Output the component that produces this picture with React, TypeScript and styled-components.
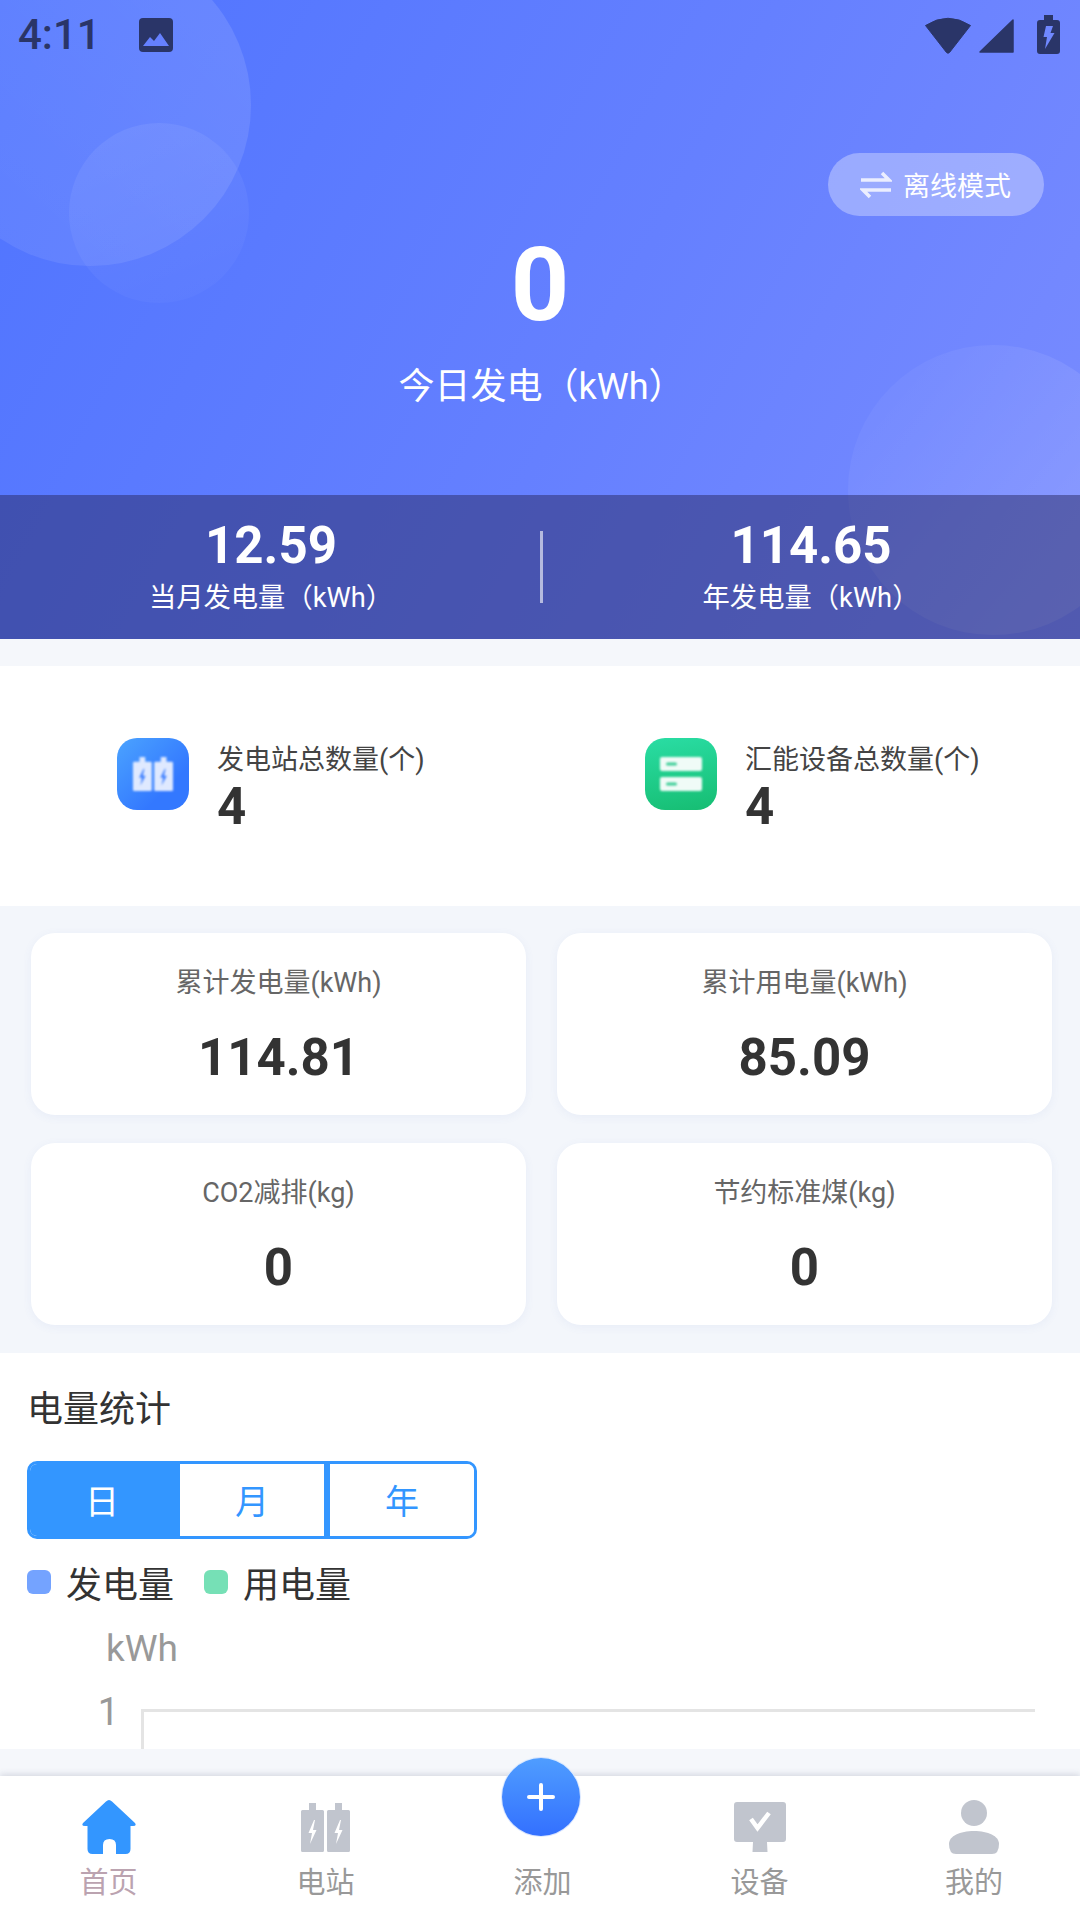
import React from "react";
import styled, { createGlobalStyle } from "styled-components";

const FONT = `Roboto, "Noto Sans CJK SC", sans-serif`;

const GlobalStyle = createGlobalStyle`
  html, body {
    margin: 0;
    padding: 0;
    background: #f5f7fb;
  }
  * {
    box-sizing: border-box;
  }
`;

const Page = styled.div`
  width: 1080px;
  height: 1920px;
  display: flex;
  flex-direction: column;
  overflow: hidden;
  position: relative;
  background: #f5f7fb;
  font-family: ${FONT};
`;

// Hero
const Hero = styled.header`
  position: relative;
  height: 639px;
  display: flex;
  flex-direction: column;
  overflow: hidden;
  background: linear-gradient(118deg, #4f74ff 0%, #6580ff 55%, #7a8cff 100%);
`;

const Bubble = styled.div<{ $x: number; $y: number; $r: number; $angle: number; $from: number; $to: number }>`
  position: absolute;
  left: ${(p) => p.$x - p.$r}px;
  top: ${(p) => p.$y - p.$r}px;
  width: ${(p) => p.$r * 2}px;
  height: ${(p) => p.$r * 2}px;
  border-radius: 50%;
  background: linear-gradient(
    ${(p) => p.$angle}deg,
    rgba(255, 255, 255, ${(p) => p.$from}),
    rgba(255, 255, 255, ${(p) => p.$to})
  );
`;

const StatusBar = styled.div`
  position: relative;
  height: 70px;
  display: flex;
  align-items: center;
  padding: 0 20px 0 18px;
  color: #2a3568;
`;

const Clock = styled.span`
  font-size: 42px;
  line-height: 70px;
  font-weight: 500;
  width: 120px;
`;

const StatusRight = styled.div`
  margin-left: auto;
  display: flex;
  align-items: center;
  gap: 8px;
`;

const ModePill = styled.div`
  position: relative;
  align-self: flex-end;
  margin: 83px 36px 0 0;
  width: 216px;
  height: 63px;
  border-radius: 32px;
  background: rgba(255, 255, 255, 0.32);
  display: flex;
  align-items: center;
  padding-left: 32px;
  gap: 11px;
  color: #fff;
  font-size: 27px;
`;

const BigValue = styled.div`
  position: relative;
  margin-top: 17px;
  text-align: center;
  color: #fff;
  font-size: 102px;
  line-height: 105px;
  font-weight: 700;
`;

const BigLabel = styled.div`
  position: relative;
  margin-top: 24px;
  padding-left: 3px;
  text-align: center;
  color: #fff;
  font-size: 36px;
  line-height: 50px;
`;

const Strip = styled.div`
  position: relative;
  margin-top: auto;
  height: 144px;
  display: grid;
  grid-template-columns: 1fr 1fr;
  background: rgba(44, 44, 104, 0.52);
`;

const StripCol = styled.div<{ $divided?: boolean }>`
  position: relative;
  display: flex;
  flex-direction: column;
  align-items: center;
  padding: 22px 0 0 2px;
  color: #fff;
  ${(p) =>
    p.$divided &&
    `&::before {
      content: "";
      position: absolute;
      left: 0;
      top: 36px;
      width: 3px;
      height: 72px;
      background: rgba(255, 255, 255, 0.6);
    }`}
`;

const StripValue = styled.div`
  font-size: 51px;
  line-height: 58px;
  font-weight: 700;
`;

const StripLabel = styled.div`
  font-size: 27.3px;
  line-height: 36px;
  margin-top: 5px;
`;

// Counters
const CounterPanel = styled.section`
  margin-top: 27px;
  height: 240px;
  background: #fff;
  display: grid;
  grid-template-columns: 528px 1fr;
  padding-left: 117px;
  align-items: center;
`;

const Counter = styled.div`
  display: flex;
  align-items: flex-start;
  gap: 28px;
`;

const CounterIcon = styled.div<{ $tone: "blue" | "green" }>`
  width: 72px;
  height: 72px;
  border-radius: 20px;
  display: flex;
  align-items: center;
  justify-content: center;
  background: ${(p) =>
    p.$tone === "blue"
      ? "linear-gradient(135deg, #4ba3ff 0%, #3378ff 70%)"
      : "linear-gradient(170deg, #2adda4 0%, #16bd72 100%)"};
  svg {
    filter: blur(0.8px);
  }
`;

const CounterText = styled.div`
  padding-top: 4px;
`;

const CounterLabel = styled.div`
  color: #444;
  font-size: 27px;
  line-height: 36px;
`;

const CounterValue = styled.div`
  margin-top: 1px;
  color: #333;
  font-size: 51px;
  line-height: 56px;
  font-weight: 700;
`;

// Totals
const TotalsGrid = styled.section`
  height: 447px;
  padding: 27px 28px 27px 31px;
  display: grid;
  grid-template-columns: 495px 495px;
  grid-auto-rows: 182px;
  column-gap: 31px;
  row-gap: 28px;
  background: #f3f6fb;
`;

const TotalCard = styled.div`
  background: #fff;
  border-radius: 24px;
  box-shadow: 0 2px 10px rgba(90, 120, 200, 0.07);
  display: flex;
  flex-direction: column;
  align-items: center;
  padding-top: 28px;
`;

const TotalLabel = styled.div`
  color: #666;
  font-size: 27px;
  line-height: 44px;
`;

const TotalValue = styled.div`
  margin-top: 22px;
  color: #333;
  font-size: 51px;
  line-height: 62px;
  font-weight: 700;
`;

// Chart
const ChartPanel = styled.section`
  height: 396px;
  background: #fff;
  padding: 32px 45px 0 27px;
  overflow: hidden;
`;

const ChartTitle = styled.h2`
  margin: 0;
  color: #333;
  font-size: 36px;
  line-height: 50px;
  font-weight: 400;
`;

const Segments = styled.div`
  margin-top: 26px;
  width: 450px;
  height: 78px;
  display: grid;
  grid-template-columns: 150px 144px 1fr;
  border: 3px solid #3396ff;
  border-radius: 10px;
  overflow: hidden;
`;

const Segment = styled.div<{ $active?: boolean; $divided?: boolean }>`
  display: flex;
  align-items: center;
  justify-content: center;
  padding-bottom: 2px;
  font-size: 34px;
  color: ${(p) => (p.$active ? "#fff" : "#3396ff")};
  background: ${(p) => (p.$active ? "#3396ff" : "#fff")};
  padding-right: ${(p) => (p.$active ? "6px" : "0")};
  border-left: ${(p) => (p.$divided ? "6px solid #3396ff" : "none")};
`;

const Legend = styled.div`
  margin-top: 18px;
  height: 50px;
  display: flex;
  align-items: center;
`;

const LegendItem = styled.div`
  display: flex;
  align-items: center;
  gap: 15px;
  margin-right: 30px;
  color: #333;
  font-size: 36px;
`;

const Swatch = styled.span<{ $color: string }>`
  width: 24px;
  height: 24px;
  border-radius: 6px;
  background: ${(p) => p.$color};
`;

const Unit = styled.div`
  margin: 18px 0 0 79px;
  color: #999;
  font-size: 37px;
  line-height: 48px;
`;

const AxisRow = styled.div`
  margin-top: 29px;
  display: flex;
  align-items: flex-start;
`;

const AxisTick = styled.div`
  width: 114px;
  padding-right: 22px;
  text-align: right;
  color: #999;
  font-size: 38px;
  line-height: 44px;
  margin-top: -12px;
`;

const Plot = styled.div`
  flex: 1;
  height: 60px;
  margin-top: 7px;
  border-top: 3px solid #e4e4e4;
  border-left: 3px solid #e4e4e4;
`;

// Bottom tabs
const TabBar = styled.nav`
  margin-top: 27px;
  height: 144px;
  position: relative;
  background: #fff;
  display: grid;
  grid-template-columns: 217px 217px 217px 217px 212px;
  box-shadow: 0 -2px 6px rgba(60, 70, 100, 0.16);
`;

const Tab = styled.div<{ $active?: boolean }>`
  display: flex;
  flex-direction: column;
  align-items: center;
  color: ${(p) => (p.$active ? "#bba3b0" : "#999")};
  font-size: 29px;
  padding-top: 24px;
`;

const TabIcon = styled.div`
  width: 54px;
  height: 54px;
  display: flex;
  align-items: flex-start;
  justify-content: center;
`;

const TabText = styled.span`
  margin-top: 9px;
  line-height: 40px;
`;

const AddButton = styled.div`
  position: absolute;
  left: 501px;
  top: -19px;
  width: 80px;
  height: 80px;
  border-radius: 50%;
  background: linear-gradient(180deg, #4f9dff 0%, #3370ff 100%);
  border: 1px solid rgba(255, 255, 255, 0.8);
  display: flex;
  align-items: center;
  justify-content: center;
`;

const STATUS = "#2a3568";

const ImageIcon = () => (
  <svg width="36" height="36" viewBox="0 0 36 36">
    <rect x="1" y="1" width="34" height="34" rx="4" fill={STATUS} />
    <path d="M5 29 L12 20 L16 24 L22 16 L31 29 Z" fill="#6580ff" />
  </svg>
);

const WifiIcon = () => (
  <svg width="46" height="37" viewBox="0 0 46 37">
    <path
      d="M0.5 8.5 Q23 -6 45.5 8.5 L24.5 35.5 Q23 37 21.5 35.5 Z"
      fill={STATUS}
      stroke={STATUS}
      strokeLinejoin="round"
    />
  </svg>
);

const SignalIcon = () => (
  <svg width="35" height="34" viewBox="0 0 35 34" style={{ marginTop: 2 }}>
    <path d="M34 1 V33 H1 Z" fill={STATUS} stroke={STATUS} strokeWidth="1.5" strokeLinejoin="round" />
  </svg>
);

const BatteryIcon = () => (
  <svg width="23" height="39" viewBox="0 0 23 39" style={{ marginLeft: 15, marginTop: -2 }}>
    <path d="M7 0 H16 V5 H20 Q23 5 23 8 V36 Q23 39 20 39 H3 Q0 39 0 36 V8 Q0 5 3 5 H7 Z" fill={STATUS} />
    <path d="M9 11 H16 L13.5 18 H17.5 L8 34 L10 22 H6.5 Z" fill="#7088ff" />
  </svg>
);

const SwapIcon = () => (
  <svg width="32" height="28" viewBox="0 0 32 28" fill="none" stroke="#fff" strokeOpacity="0.8" strokeWidth="3.5">
    <path d="M1 9 H29 L22 2" />
    <path d="M31 19 H3 L10 26" />
  </svg>
);

// two battery cells, each 23 wide on a 49 box
const BatteriesArt = ({ bolt, body }: { bolt: string; body: string }) => (
  <>
    <path d="M8 0 H15 V7 H21.5 Q23 7 23 8.5 V47.5 Q23 49 21.5 49 H1.5 Q0 49 0 47.5 V8.5 Q0 7 1.5 7 H8 Z" fill={body} />
    <path d="M13 17 L7.5 30 H11 L9 41 L15.5 27 H12 L14 17 Z" fill={bolt} />
    <path d="M34 0 H41 V7 H47.5 Q49 7 49 8.5 V47.5 Q49 49 47.5 49 H27.5 Q26 49 26 47.5 V8.5 Q26 7 27.5 7 H34 Z" fill={body} />
    <path d="M39 17 L33.5 30 H37 L35 41 L41.5 27 H38 L40 17 Z" fill={bolt} />
  </>
);

const StationBadge = () => (
  <svg width="40" height="34" viewBox="0 0 49 49" preserveAspectRatio="none">
    <BatteriesArt bolt="#3f80ff" body="#dfe9ff" />
  </svg>
);

const DeviceBadge = () => (
  <svg width="42" height="34" viewBox="0 0 42 34">
    <rect x="0" y="0" width="42" height="14" rx="2" fill="#f0fbf7" />
    <rect x="0" y="20" width="42" height="14" rx="2" fill="#f0fbf7" />
    <rect x="6" y="5.5" width="11" height="3" rx="1.5" fill="#3fce98" />
    <rect x="6" y="25.5" width="11" height="3" rx="1.5" fill="#3fce98" />
  </svg>
);

const TAB_GREY = "#c1c5ce";

const HomeTabIcon = () => (
  <svg width="54" height="54" viewBox="0 0 54 54">
    <path
      d="M27 0 Q28.5 0 30 1.5 L53 23 Q55 26 51 26 H48.5 V49 Q48.5 54 43.5 54 H34 V45 Q34 39 27.5 39 Q21 39 21 45 V54 H10.5 Q5.5 54 5.5 49 V26 H3 Q-1 26 1 23 L24 1.5 Q25.5 0 27 0 Z"
      fill="#3396ff"
    />
  </svg>
);

const StationTabIcon = () => (
  <svg width="49" height="49" viewBox="0 0 49 49" style={{ marginTop: 3 }}>
    <BatteriesArt bolt="#fff" body={TAB_GREY} />
  </svg>
);

const DeviceTabIcon = () => (
  <svg width="52" height="50" viewBox="0 0 52 50" style={{ marginTop: 2 }}>
    <path d="M3 0 H49 Q52 0 52 3 V37 Q52 40 49 40 H33 L33.5 50 H18.5 L19 40 H3 Q0 40 0 37 V3 Q0 0 3 0 Z" fill={TAB_GREY} />
    <path d="M17 17 L23.5 26 L35 11" fill="none" stroke="#fff" strokeWidth="4.5" />
  </svg>
);

const MineTabIcon = () => (
  <svg width="50" height="54" viewBox="0 0 50 54">
    <ellipse cx="25" cy="13" rx="13" ry="13" fill={TAB_GREY} />
    <path d="M0 44 C0 36 11 31 25 31 C39 31 50 36 50 44 Q50 54 43 54 H7 Q0 54 0 44 Z" fill={TAB_GREY} />
  </svg>
);

const totals = [
  { label: "累计发电量(kWh)", value: "114.81" },
  { label: "累计用电量(kWh)", value: "85.09" },
  { label: "CO2减排(kg)", value: "0" },
  { label: "节约标准煤(kg)", value: "0" },
];

const App = () => {
  return (
    <Page>
      <GlobalStyle />
      <Hero>
        <Bubble $x={90} $y={105} $r={161} $angle={225} $from={0.12} $to={0.07} />
        <Bubble $x={159} $y={213} $r={90} $angle={160} $from={0.08} $to={0.02} />
        <Bubble $x={993} $y={490} $r={145} $angle={130} $from={0.02} $to={0.16} />
        <StatusBar>
          <Clock>4:11</Clock>
          <ImageIcon />
          <StatusRight>
            <WifiIcon />
            <SignalIcon />
            <BatteryIcon />
          </StatusRight>
        </StatusBar>
        <ModePill>
          <SwapIcon />
          离线模式
        </ModePill>
        <BigValue>0</BigValue>
        <BigLabel>今日发电（kWh）</BigLabel>
        <Strip>
          <StripCol>
            <StripValue>12.59</StripValue>
            <StripLabel>当月发电量（kWh）</StripLabel>
          </StripCol>
          <StripCol $divided>
            <StripValue>114.65</StripValue>
            <StripLabel>年发电量（kWh）</StripLabel>
          </StripCol>
        </Strip>
      </Hero>

      <CounterPanel>
        <Counter>
          <CounterIcon $tone="blue">
            <StationBadge />
          </CounterIcon>
          <CounterText>
            <CounterLabel>发电站总数量(个)</CounterLabel>
            <CounterValue>4</CounterValue>
          </CounterText>
        </Counter>
        <Counter>
          <CounterIcon $tone="green">
            <DeviceBadge />
          </CounterIcon>
          <CounterText>
            <CounterLabel>汇能设备总数量(个)</CounterLabel>
            <CounterValue>4</CounterValue>
          </CounterText>
        </Counter>
      </CounterPanel>

      <TotalsGrid>
        {totals.map((item) => (
          <TotalCard key={item.label}>
            <TotalLabel>{item.label}</TotalLabel>
            <TotalValue>{item.value}</TotalValue>
          </TotalCard>
        ))}
      </TotalsGrid>

      <ChartPanel>
        <ChartTitle>电量统计</ChartTitle>
        <Segments>
          <Segment $active>日</Segment>
          <Segment>月</Segment>
          <Segment $divided>年</Segment>
        </Segments>
        <Legend>
          <LegendItem>
            <Swatch $color="#74a3ff" />
            发电量
          </LegendItem>
          <LegendItem>
            <Swatch $color="#76e0b6" />
            用电量
          </LegendItem>
        </Legend>
        <Unit>kWh</Unit>
        <AxisRow>
          <AxisTick>1</AxisTick>
          <Plot />
        </AxisRow>
      </ChartPanel>

      <TabBar>
        <Tab $active>
          <TabIcon>
            <HomeTabIcon />
          </TabIcon>
          <TabText>首页</TabText>
        </Tab>
        <Tab>
          <TabIcon>
            <StationTabIcon />
          </TabIcon>
          <TabText>电站</TabText>
        </Tab>
        <Tab>
          <TabIcon />
          <TabText>添加</TabText>
        </Tab>
        <Tab>
          <TabIcon>
            <DeviceTabIcon />
          </TabIcon>
          <TabText>设备</TabText>
        </Tab>
        <Tab>
          <TabIcon>
            <MineTabIcon />
          </TabIcon>
          <TabText>我的</TabText>
        </Tab>
        <AddButton>
          <svg width="28" height="28" viewBox="0 0 28 28">
            <path d="M14 2 V26 M2 14 H26" stroke="#fff" strokeWidth="4" strokeLinecap="round" />
          </svg>
        </AddButton>
      </TabBar>
    </Page>
  );
};

export default App;
